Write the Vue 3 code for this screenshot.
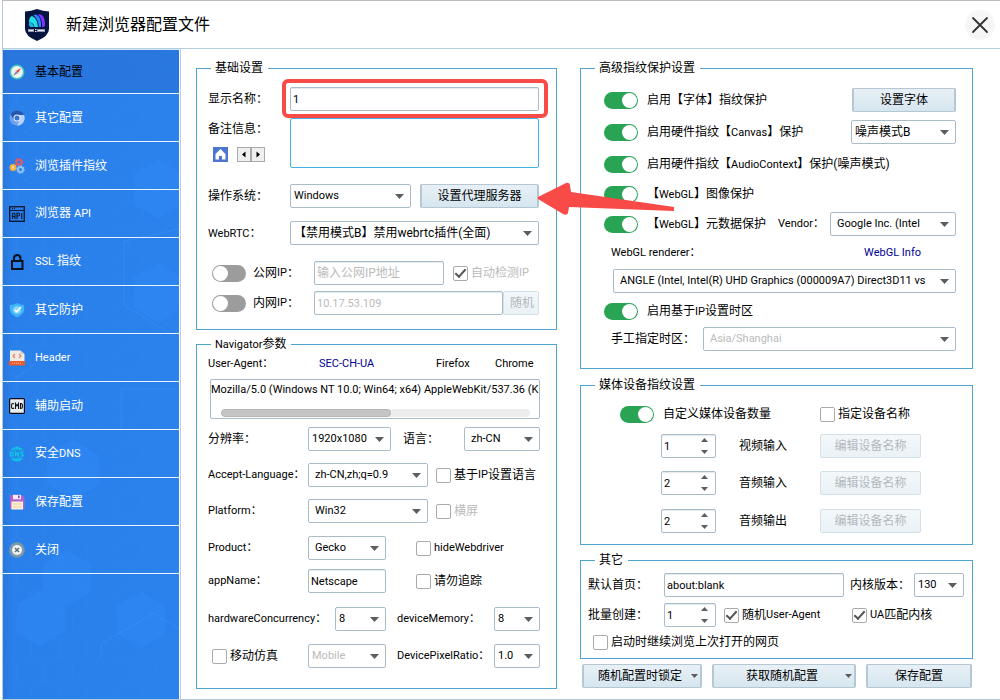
<script setup>
import { reactive } from 'vue'

const form = reactive({
  name: '1',
  note: '',
  publicIp: '',
  localIp: '10.17.53.109',
  userAgent:
    'Mozilla/5.0 (Windows NT 10.0; Win64; x64) AppleWebKit/537.36 (KHTML, like Gecko) Chrome/130.0.0.0 Safari/537.36',
  appName: 'Netscape',
  homepage: 'about:blank',
  batch: 1,
})

const devices = reactive([
  { id: 'video-in', label: '视频输入', count: 1 },
  { id: 'audio-in', label: '音频输入', count: 2 },
  { id: 'audio-out', label: '音频输出', count: 2 },
])
</script>

<template>
  <div class="window">
    <header class="titlebar">
      <svg class="logo" viewBox="0 0 26 32" aria-hidden="true">
        <path d="M1 2.500Q7 2 13 0Q19 2 25 2.500V20Q25 27 13 32Q1 27 1 20Z" fill="#06153f" />
        <path d="M5 13Q5 8 8 7L11 9Q14 13 14 18H10.500Q10 14 5 13Z" fill="#21e0e6" />
        <path d="M5 13Q9 14 10 18H7Q5 18 5 16Z" fill="#16b9ec" />
        <path d="M9.500 6Q12 4.500 14.500 7Q17 10 17 14V18H14.800Q14.500 11 9.500 6Z" fill="#2784ff" />
        <path d="M14 5.500Q17 4.500 19 7Q21 10 21 14V16Q21 18 18 18Q18.500 10 14 5.500Z" fill="#7a35ff" />
        <path d="M5 20v3M7 20v3M9 20v3M11 20.500h1.500M11 22.500h1.500M14 20v3M16 20v3M18 20v3M20 20v3M5 21.500h4M14 21.500h6" stroke="#e9eefb" stroke-width="1.200" fill="none" />
      </svg>
      <h1>新建浏览器配置文件</h1>
      <button class="close" type="button" aria-label="关闭窗口">
        <svg viewBox="0 0 30 30"><path d="M8 8L22 22M22 8L8 22" stroke="#333" stroke-width="1.800" stroke-linecap="round" /></svg>
      </button>
    </header>

    <div class="body">
      <nav class="sidebar">
        <svg class="backdrop" viewBox="0 0 176 650" preserveAspectRatio="xMidYMax slice" aria-hidden="true">
          <defs>
            <pattern id="hex" width="28" height="48" patternUnits="userSpaceOnUse">
              <path d="M14 0V8L28 16V32L14 40V48M14 8L0 16V32L14 40" fill="none" stroke="#3b92f5" stroke-opacity=".16" />
            </pattern>
          </defs>
          <rect width="176" height="650" fill="url(#hex)" />
          <g fill="#2e90fb" fill-opacity=".3">
            <path d="M64 501L88 515V543L64 557L40 543V515Z" />
            <path d="M38 541L62 555V583L38 597L14 583V555Z" />
            <path d="M138 543L162 557V585L138 599L114 585V557Z" />
            <path d="M155 214L180 229V259L155 274L131 259V229Z" />
            <path d="M155 110L180 125V155L155 170L131 155V125Z" />
            <path d="M70 391L96 406V436L70 451L44 436V406Z" />
          </g>
          <g fill="none" stroke="#46a3ff" stroke-opacity=".3">
            <path d="M98 610V595L151 564L176 580" />
            <path d="M176 180L121 192V256L176 290" />
            <path d="M118 380V340H176" />
            <path d="M4 334L40 310" stroke-dasharray="6 3" />
          </g>
        </svg>

        <a href="#basic" class="active">
          <svg class="ico" viewBox="0 0 16 16"><circle cx="8" cy="8" r="7.500" fill="#43c3c0" /><circle cx="8" cy="8" r="6" fill="#eef3f2" /><path d="M12 4L9 9L7 7Z" fill="#e2453c" /><path d="M4 12L7 7L9 9Z" fill="#7e8e98" /></svg>
          <span>基本配置</span>
        </a>
        <a href="#other">
          <svg class="ico" viewBox="0 0 16 16"><circle cx="8" cy="8" r="7.500" fill="#6ea2f0" /><path d="M1.500 4.300A7.500 7.500 0 0 1 15 5H8A3.500 3.500 0 0 0 5 10Z" fill="#2557ad" /><path d="M15 5A7.500 7.500 0 0 1 8 15.500L11 9.500A4 4 0 0 0 9.500 5Z" fill="#b9d2fb" /><circle cx="8" cy="8" r="3.500" fill="#e7effd" /><circle cx="8" cy="8" r="2.500" fill="#3a73d4" /></svg>
          <span>其它配置</span>
        </a>
        <a href="#plugins">
          <svg class="ico" viewBox="0 0 16 16" fill="none"><circle cx="10" cy="4" r="2.600" stroke="#e2586a" stroke-width="2" /><circle cx="10" cy="4" r="3.800" stroke="#e2586a" stroke-dasharray="1.500 1.500" /><circle cx="4" cy="9.500" r="3.500" fill="#f7b03c" /><path d="M4 8v3" stroke="#fff" /><circle cx="11.500" cy="11.500" r="2.600" stroke="#8cc4f8" stroke-width="2" /><circle cx="11.500" cy="11.500" r="3.900" stroke="#8cc4f8" stroke-dasharray="1.500 1.500" /></svg>
          <span>浏览插件指纹</span>
        </a>
        <a href="#api">
          <svg class="ico" viewBox="0 0 16 16" fill="none" stroke="#091a35"><rect x=".7" y=".7" width="14.600" height="14.600" stroke-width="1.400" /><path d="M1 4.500H15M3 2.700h1M5 2.700h1M3.500 13V8.500Q3.500 7 5 7Q6 7 6 8.500V13M3.500 10.500H6M8 13V7H9.500Q10.500 7 10.500 8.500Q10.500 10 9.500 10H8M12.700 7V13" stroke-width="1.200" /></svg>
          <span>浏览器 <span class="en">API</span></span>
        </a>
        <a href="#ssl">
          <svg class="ico" viewBox="0 0 16 16" fill="none" stroke="#06101f" stroke-width="2"><rect x="3" y="7" width="10.500" height="8" /><path d="M5 7V4.500Q5 1 8.200 1Q11.500 1 11.500 4.500V7" /></svg>
          <span><span class="en">SSL</span> 指纹</span>
        </a>
        <a href="#protect">
          <svg class="ico" viewBox="0 0 16 16"><path d="M.8 3Q5 3 8 1Q11 3 15.200 3V8Q14 13 8 15.500Q2 13 .8 8Z" fill="#3db5f6" /><circle cx="8" cy="8" r="3.800" fill="#8ed8ff" /><path d="M6 8L7.700 9.700L12 5" stroke="#fff" stroke-width="1.600" fill="none" /></svg>
          <span>其它防护</span>
        </a>
        <a href="#header">
          <svg class="ico" viewBox="0 0 16 16"><path d="M1 .5H11.500L15.500 4V11H1Z" fill="#eeeae6" /><path d="M11.500 .5V4H15.500Z" fill="#cfc9c4" /><path d="M6 4L4 6L6 8M10 4L12 6L10 8" stroke="#e88865" fill="none" stroke-width="1.300" /><path d="M0 11H16V15.500H0Z" fill="#ec5b2c" /><path d="M3 13.200H13" stroke="#f7bda6" stroke-dasharray="1 1" /></svg>
          <span class="en">Header</span>
        </a>
        <a href="#helper">
          <svg class="ico" viewBox="0 0 16 16" fill="none"><rect x=".6" y=".6" width="14.800" height="14.800" rx="1" fill="#e9edf2" stroke="#050a12" stroke-width="1.200" /><path d="M5 6Q4.500 5.500 3.500 5.500Q2.500 5.500 2.500 8Q2.500 10.500 3.500 10.500Q4.500 10.500 5 10M6.500 11V5.500L8 8L9.500 5.500V11M11.500 5.500V10.500H12Q13.500 10.500 13.500 8Q13.500 5.500 12 5.500Z" stroke="#111" stroke-width="1.100" /></svg>
          <span>辅助启动</span>
        </a>
        <a href="#dns">
          <svg class="ico" viewBox="0 0 16 16" fill="none" stroke="#10c4e4" stroke-width="1.300"><path d="M2.500 4A7 7 0 0 1 13.500 4M2.500 12A7 7 0 0 0 13.500 12M5 4.500Q6 1.500 8 1Q10 1.500 11 4.500M5 11.500Q6 14.500 8 15Q10 14.500 11 11.500M8 1V4.500M8 11.500V15" /><path d="M1.500 6V10H2.500Q4.200 10 4.200 8Q4.200 6 2.500 6ZM6.500 10.500V6L9.500 10V5.500M14.500 6H12.500Q11.800 6 12 7.300L14 8.700Q14.500 10 13.500 10H11.800" /></svg>
          <span>安全<span class="en">DNS</span></span>
        </a>
        <a href="#save">
          <svg class="ico" viewBox="0 0 16 16"><path d="M1 1H13L15.500 4V15H1Z" fill="#b45ed0" /><rect x="4" y=".8" width="8" height="4.500" fill="#f2edf7" /><rect x="9" y="1.500" width="1.600" height="2.600" fill="#8e44a8" /><rect x="2.500" y="7.500" width="11.500" height="8" fill="#fdf1d8" /><path d="M4 10H12.500M4 13H12.500" stroke="#f0cf96" /></svg>
          <span>保存配置</span>
        </a>
        <a href="#close">
          <svg class="ico" viewBox="0 0 16 16"><circle cx="8" cy="8" r="7.800" fill="#7d98a6" /><circle cx="8" cy="8" r="5" fill="#f2f5f6" /><path d="M6 6L10 10M10 6L6 10" stroke="#5c7380" stroke-width="1.600" /></svg>
          <span>关闭</span>
        </a>
      </nav>

      <main class="main">
        <div class="column">
          <fieldset class="basic">
            <legend>基础设置</legend>
            <div class="row gap12">
              <label class="cap" for="name">显示名称：</label>
              <span class="fill marked"><input id="name" v-model="form.name" class="box en" type="text" /></span>
            </div>
            <div class="row gap7 note">
              <div class="cap">
                <label for="note">备注信息：</label>
                <div class="tools">
                  <button type="button" class="home" aria-label="主页">
                    <svg viewBox="0 0 15 15"><path d="M0 0H15V15H0Z" fill="#4f76cf" /><path d="M7.500 2L2.500 7V12.500H6V9H9V12.500H12.500V7Z" fill="#fff" /></svg>
                  </button>
                  <span class="stepper">
                    <button type="button" aria-label="上一个"><svg viewBox="0 0 12 13"><path d="M7.500 3.500V9.500L4 6.500Z" /></svg></button>
                    <button type="button" aria-label="下一个"><svg viewBox="0 0 12 13"><path d="M4.500 3.500V9.500L8 6.500Z" /></svg></button>
                  </span>
                </div>
              </div>
              <textarea id="note" v-model="form.note" class="fill"></textarea>
            </div>
            <div class="row gap16">
              <label class="cap" for="os">操作系统：</label>
              <span class="sel fill"><select id="os"><option>Windows</option></select></span>
              <span class="proxy">
                <button type="button" class="btn">设置代理服务器</button>
                <svg class="pointer" viewBox="0 0 138 36" aria-hidden="true">
                  <path d="M1 15L29 1Q33 0 33 4L34 10L137 25V29L32 25L31 31Q30 34 26 32L1 17Q0 16 1 15Z" fill="#f84a47" />
                </svg>
              </span>
            </div>
            <div class="row gap13">
              <label class="cap" for="rtc"><span class="en">WebRTC</span>：</label>
              <span class="sel fill"><select id="rtc" class="cjk"><option>【禁用模式B】禁用webrtc插件(全面)</option></select></span>
            </div>
            <div class="row gap16 ip">
              <label class="toggle ipcap"><input type="checkbox" class="switch" />公网<span class="en">IP</span>：</label>
              <input class="box fill" type="text" v-model="form.publicIp" placeholder="输入公网IP地址" aria-label="公网IP地址" />
              <label class="check auto off"><input type="checkbox" checked />自动检测<span class="en">IP</span></label>
            </div>
            <div class="row gap6 ip">
              <label class="toggle ipcap"><input type="checkbox" class="switch" />内网<span class="en">IP</span>：</label>
              <input class="box en fill" type="text" :value="form.localIp" disabled aria-label="内网IP地址" />
              <button type="button" class="btn random" disabled>随机</button>
            </div>
          </fieldset>

          <fieldset class="navigator">
            <legend><span class="en">Navigator</span>参数</legend>
            <div class="links en">
              <label for="ua">User-Agent：</label>
              <a href="#sec" class="blue">SEC-CH-UA</a>
              <a href="#firefox">Firefox</a>
              <a href="#chrome">Chrome</a>
            </div>
            <div class="agent">
              <input id="ua" class="en" type="text" v-model="form.userAgent" />
              <div class="track"><div class="thumb"></div></div>
            </div>
            <div class="row gap8">
              <label class="cap" for="res">分辨率：</label>
              <span class="sel w83"><select id="res"><option>1920x1080</option></select></span>
              <label class="second" for="lang">语言：</label>
              <span class="sel w76 end"><select id="lang" class="pad"><option>zh-CN</option></select></span>
            </div>
            <div class="row gap12">
              <label class="cap en" for="accept">Accept-Language：</label>
              <span class="sel w120"><select id="accept" class="pad"><option>zh-CN,zh;q=0.9</option></select></span>
              <label class="check near"><input type="checkbox" />基于<span class="en">IP</span>设置语言</label>
            </div>
            <div class="row gap12">
              <label class="cap en" for="platform">Platform：</label>
              <span class="sel w120"><select id="platform" class="pad"><option>Win32</option></select></span>
              <label class="check near off"><input type="checkbox" disabled />横屏</label>
            </div>
            <div class="row gap13">
              <label class="cap en" for="product">Product：</label>
              <span class="sel w78"><select id="product" class="pad"><option>Gecko</option></select></span>
              <label class="check far en"><input type="checkbox" />hideWebdriver</label>
            </div>
            <div class="row gap9">
              <label class="cap en" for="appname">appName：</label>
              <input id="appname" v-model="form.appName" class="box en w78" type="text" />
              <label class="check far"><input type="checkbox" />请勿追踪</label>
            </div>
            <div class="row gap14">
              <label class="cap wide en" for="hw">hardwareConcurrency：</label>
              <span class="sel w51"><select id="hw"><option>8</option></select></span>
              <label class="third en" for="mem">deviceMemory：</label>
              <span class="sel w46 end"><select id="mem"><option>8</option></select></span>
            </div>
            <div class="row gap13">
              <label class="cap check mobile"><input type="checkbox" />移动仿真</label>
              <span class="sel w78"><select disabled aria-label="移动设备"><option>Mobile</option></select></span>
              <label class="third en" for="dpr">DevicePixelRatio：</label>
              <span class="sel w46 end"><select id="dpr"><option>1.0</option></select></span>
            </div>
          </fieldset>
        </div>

        <div class="column right">
          <fieldset class="advanced">
            <legend>高级指纹保护设置</legend>
            <div class="row gap13">
              <label class="toggle"><input type="checkbox" class="switch" checked />启用【字体】指纹保护</label>
              <button type="button" class="btn font end">设置字体</button>
            </div>
            <div class="row gap8">
              <label class="toggle"><input type="checkbox" class="switch" checked /><span>启用硬件指纹【<span class="en">Canvas</span>】保护</span></label>
              <span class="sel w105 end"><select class="cjk" aria-label="Canvas 噪声模式"><option>噪声模式B</option></select></span>
            </div>
            <div class="row gap8">
              <label class="toggle"><input type="checkbox" class="switch" checked /><span>启用硬件指纹【<span class="en">AudioContext</span>】保护(噪声模式)</span></label>
            </div>
            <div class="row gap6">
              <label class="toggle"><input type="checkbox" class="switch" checked /><span>【<span class="en">WebGL</span>】图像保护</span></label>
            </div>
            <div class="row gap6">
              <label class="toggle"><input type="checkbox" class="switch" checked /><span>【<span class="en">WebGL</span>】元数据保护</span></label>
              <label class="second en" for="vendor">Vendor：</label>
              <span class="sel w126 end"><select id="vendor" class="pad"><option>Google Inc. (Intel</option></select></span>
            </div>
            <div class="row gap8 renderer en">
              <label for="renderer">WebGL renderer：</label>
              <a href="#webgl" class="blue">WebGL Info</a>
            </div>
            <div class="row gap8 gpu">
              <span class="sel fill"><select id="renderer" class="pad"><option>ANGLE (Intel, Intel(R) UHD Graphics (000009A7) Direct3D11 vs</option></select></span>
            </div>
            <div class="row gap6">
              <label class="toggle"><input type="checkbox" class="switch" checked /><span>启用基于<span class="en">IP</span>设置时区</span></label>
            </div>
            <div class="row gap4 zone">
              <label for="zone">手工指定时区：</label>
              <span class="sel fill"><select id="zone" class="pad" disabled><option>Asia/Shanghai</option></select></span>
            </div>
          </fieldset>

          <fieldset class="media">
            <legend>媒体设备指纹设置</legend>
            <div class="row gap10">
              <label class="toggle"><input type="checkbox" class="switch" checked />自定义媒体设备数量</label>
              <label class="check named"><input type="checkbox" />指定设备名称</label>
            </div>
            <div v-for="d in devices" :key="d.id" class="row device">
              <span class="num w55"><input :id="d.id" v-model="d.count" type="number" class="box en" /></span>
              <label :for="d.id">{{ d.label }}</label>
              <button type="button" class="btn named" disabled>编辑设备名称</button>
            </div>
          </fieldset>

          <fieldset class="misc">
            <legend>其它</legend>
            <div class="row gap6">
              <label class="cap" for="homepage">默认首页：</label>
              <input id="homepage" v-model="form.homepage" class="box en fill" type="text" />
              <label class="core" for="core">内核版本：</label>
              <span class="sel w50"><select id="core"><option>130</option></select></span>
            </div>
            <div class="row gap6">
              <label class="cap" for="batch">批量创建：</label>
              <span class="num w52"><input id="batch" v-model="form.batch" type="number" class="box en" /></span>
              <label class="check near"><input type="checkbox" checked />随机<span class="en">User-Agent</span></label>
              <label class="check match"><input type="checkbox" checked /><span class="en">UA</span>匹配内核</label>
            </div>
            <div class="row gap4 resume">
              <label class="check"><input type="checkbox" />启动时继续浏览上次打开的网页</label>
            </div>
          </fieldset>

          <div class="actions">
            <button type="button" class="btn split">随机配置时锁定</button>
            <button type="button" class="btn split">获取随机配置</button>
            <button type="button" class="btn">保存配置</button>
          </div>
        </div>
      </main>
    </div>
  </div>
</template>

<style>
body {
  background: #fff;
}
</style>

<style scoped>
* {
  box-sizing: border-box;
}
.window {
  display: flex;
  flex-direction: column;
  min-height: 100vh;
  margin-left: 2px;
  border-top: 1px solid #bbb;
  border-left: 1px solid #bccbd8;
  border-bottom: 1px solid #b8cad6;
  color: #000;
  font: 12px/14px Roboto, "Noto Sans CJK SC", sans-serif;
  white-space: nowrap;
}
button,
input,
select,
textarea {
  margin: 0;
  color: inherit;
  font: inherit;
}
.window .en,
.window select {
  font-size: 11px;
}
.window select.cjk {
  font-size: 12px;
}
a {
  color: inherit;
  text-decoration: none;
}
.titlebar {
  display: flex;
  align-items: center;
  height: 48px;
  padding: 0 5px 0 21px;
  border-bottom: 1px solid #b4cddd;
}
.logo {
  width: 26px;
  height: 32px;
}
h1 {
  flex: 1;
  margin: 0 0 0 16px;
  font-size: 16px;
  font-weight: 400;
  line-height: 20px;
}
.close {
  width: 30px;
  height: 30px;
  padding: 0;
  border: 0;
  border-radius: 50%;
  background: #f6f6f6;
}
.close svg {
  display: block;
}
.body {
  display: flex;
  flex: 1;
}
.sidebar {
  position: relative;
  flex: none;
  width: 178px;
  border-top: 1px solid #d8eaf8;
  border-right: 1px solid #b9cde0;
  background: linear-gradient(90deg, #2877dc, #2a80ea 8px, #2b82ec 176px, #fff 0);
  color: #fff;
}
.backdrop {
  position: absolute;
  inset: 0;
  width: 176px;
  height: 100%;
}
.sidebar a {
  position: relative;
  display: flex;
  align-items: center;
  gap: 10px;
  height: 48px;
  margin-right: 1px;
  padding-left: 6px;
  border-bottom: 1px solid #e8f4ff;
}
.sidebar a.active {
  height: 44px;
  background: rgba(40, 110, 210, 0.5);
  color: #000;
}
.ico {
  width: 16px;
  height: 16px;
}
.main {
  display: grid;
  flex: 1;
  grid-template-columns: minmax(0, 361fr) minmax(0, 393fr);
  align-items: start;
  gap: 23px;
  padding: 12px 27px 10px 15px;
}
.column {
  display: flex;
  flex-direction: column;
  gap: 7px;
}
.column.right {
  gap: 9px;
}
fieldset {
  min-width: 0;
  margin: 0;
  padding: 0 16px 14px 11px;
  border: 1px solid #4fa3cf;
}
legend {
  height: 14px;
  margin-left: 3px;
  padding: 0 5px 0 4px;
}
.row {
  display: flex;
  align-items: center;
  height: 24px;
}
.gap4 { margin-top: 4px; }
.gap6 { margin-top: 6px; }
.gap7 { margin-top: 7px; }
.gap8 { margin-top: 8px; }
.gap9 { margin-top: 9px; }
.gap10 { margin-top: 10px; }
.gap12 { margin-top: 12px; }
.gap13 { margin-top: 13px; }
.gap14 { margin-top: 14px; }
.gap16 { margin-top: 16px; }
.w46 { width: 46px; }
.w50 { width: 50px; }
.w51 { width: 51px; }
.w52 { width: 52px; }
.w55 { width: 55px; }
.w76 { width: 76px; }
.w78 { width: 78px; }
.w83 { width: 83px; }
.w105 { width: 105px; }
.w120 { width: 120px; }
.w126 { width: 126px; }
.fill {
  flex: 1;
  min-width: 0;
}
.end {
  margin-left: auto;
}
.cap {
  flex: none;
  width: 82px;
}
.box {
  height: 24px;
  padding: 0 2px;
  border: 1px solid #a9bdc9;
  border-radius: 2px;
  outline: 0;
  background: #fff;
  box-shadow: inset 0 1px 1px #e3e9ee;
}
.box::placeholder,
.box:disabled {
  color: #bbb;
}
.sel {
  position: relative;
  flex-shrink: 0;
}
.sel.fill {
  flex-shrink: 1;
}
.sel select {
  display: block;
  appearance: none;
  width: 100%;
  height: 24px;
  padding: 0 18px 0 3px;
  border: 1px solid #a9bdc9;
  border-radius: 2px;
  outline: 0;
  background: #fff;
}
.sel select.pad {
  padding-left: 6px;
}
.sel select:disabled {
  color: #bbb;
  opacity: 1;
}
.sel::after,
.num::after,
.num::before,
.split::after {
  content: "";
  position: absolute;
  width: 9px;
  height: 5px;
  background: #5d5d5d;
  clip-path: polygon(0 0, 100% 0, 50% 100%);
  pointer-events: none;
}
.sel::after {
  top: 10px;
  right: 7px;
}
.num {
  position: relative;
  flex: none;
}
.num input {
  display: block;
  width: 100%;
  appearance: textfield;
}
.num input::-webkit-inner-spin-button {
  appearance: none;
}
.num::before,
.num::after {
  right: 8px;
  width: 7px;
  height: 4px;
}
.num::before {
  top: 4px;
  clip-path: polygon(50% 0, 100% 100%, 0 100%);
}
.num::after {
  top: 16px;
}
.btn {
  position: relative;
  height: 24px;
  padding: 0 6px;
  border: 1px solid #b3c8d4;
  border-width: 1px 2px;
  border-radius: 2px;
  background: linear-gradient(#e8f0f6, #d6e6ef);
}
.window .btn:disabled {
  border: 1px solid #d3e0e8;
  background: linear-gradient(#f3f7fa, #eaf2f6);
  color: #b3b9bd;
}
.check,
.toggle {
  display: flex;
  align-items: center;
}
.off {
  color: #bbb;
}
.check input {
  position: relative;
  flex: none;
  appearance: none;
  width: 15px;
  height: 15px;
  margin-right: 3px;
  border: 1px solid #aaa;
  border-radius: 2px;
  background: #fff;
}
.check input:checked::after {
  content: "";
  position: absolute;
  top: 2px;
  left: 1px;
  box-sizing: border-box;
  width: 11px;
  height: 6px;
  border: solid #555;
  border-width: 0 0 2px 2px;
  transform: rotate(-48deg);
}
.switch {
  position: relative;
  flex: none;
  appearance: none;
  width: 34px;
  height: 17px;
  border-radius: 9px;
  background: #9c9c9c;
}
.switch::before {
  content: "";
  position: absolute;
  top: 1px;
  left: 1px;
  width: 15px;
  height: 15px;
  border-radius: 50%;
  background: #fff;
}
.switch:checked {
  background: #29a354;
}
.switch:checked::before {
  left: 18px;
}

.basic {
  padding-right: 17px;
}
.marked {
  position: relative;
}
.marked .box {
  display: block;
  width: 100%;
}
.marked::after {
  content: "";
  position: absolute;
  inset: -8px -9px -7px -8px;
  border: 4px solid #f84a47;
  border-radius: 6px;
  pointer-events: none;
}
.note {
  align-items: stretch;
  height: 50px;
}
.note .cap {
  padding-top: 4px;
}
.tools {
  display: flex;
  gap: 9px;
  margin: 11px 0 0 5px;
}
.tools button {
  padding: 0;
  border: 0;
  background: none;
}
.tools svg {
  display: block;
}
.home {
  width: 15px;
  height: 15px;
}
.tools .stepper {
  display: flex;
}
.tools .stepper button {
  width: 14px;
  height: 15px;
  border: 1px solid #aaa;
  background: #efefef;
}
textarea {
  height: 50px;
  padding: 2px;
  border: 1px solid #43b0e6;
  border-radius: 2px;
  outline: 0;
  resize: none;
}
.proxy {
  position: relative;
  width: 119px;
  margin-left: 9px;
}
.proxy .btn {
  width: 100%;
}
.pointer {
  position: absolute;
  z-index: 2;
  top: -2px;
  left: 117px;
  width: 138px;
  height: 36px;
  pointer-events: none;
}
.ipcap {
  flex: none;
  width: 106px;
}
.ip .switch {
  margin: 0 7px 0 4px;
}
.auto {
  width: 86px;
  margin-left: 9px;
}
.random {
  width: 36px;
}

.navigator {
  padding-bottom: 20px;
}
.navigator .cap {
  width: 100px;
}
.navigator .cap.wide {
  width: 127px;
}
.links {
  display: grid;
  grid-template-columns: 111px 117px 59px 1fr;
  height: 16px;
  margin-top: 5px;
  line-height: 16px;
}
.blue {
  color: #000096;
}
.agent {
  height: 40px;
  margin: 7px 0 0 2px;
  border: 1px solid #a9bdc9;
  border-radius: 2px;
}
.agent input {
  display: block;
  width: 100%;
  height: 18px;
  padding: 0;
  border: 0;
  outline: 0;
  background: none;
}
.track {
  height: 8px;
  margin: 11px 9px 0 10px;
  border-radius: 4px;
  background: #ededed;
}
.thumb {
  width: 55%;
  height: 100%;
  border: 1px solid #b5b5b5;
  border-radius: 4px;
  background: #c5c5c5;
}
.second {
  margin-left: 12px;
}
.third {
  margin-left: 11px;
}
.near {
  margin-left: 8px;
}
.far {
  margin-left: 30px;
}
.mobile {
  padding-left: 4px;
}

.advanced {
  padding: 0 16px 17px 23px;
}
.advanced legend,
.media legend {
  margin-left: -9px;
}
.advanced .switch,
.media .switch {
  margin-right: 9px;
}
.font {
  width: 104px;
}
.row.renderer {
  justify-content: space-between;
  height: 18px;
  padding: 0 35px 0 7px;
}
.row.gpu {
  height: 24px;
  padding-left: 9px;
}
.row.gpu.gap8 {
  margin-top: 7px;
}
.zone label {
  width: 99px;
  padding-left: 7px;
}
.media {
  padding: 0 51px 11px 39px;
}
.media .row.gap10 + .device {
  margin-top: 8px;
}
.media legend {
  margin-left: -25px;
}
.named {
  width: 101px;
  margin-left: auto;
}
.device {
  margin-top: 13px;
  padding-left: 41px;
}
.device label {
  margin-left: 23px;
}
.device:last-child {
  margin-top: 14px;
}
.misc {
  margin-top: -1px;
  padding: 0 8px 4px 7px;
}
.misc legend {
  margin-left: 7px;
}
.misc .cap {
  width: 76px;
}
.core {
  width: 64px;
  margin-left: 6px;
}
.match {
  width: 112px;
  margin-left: auto;
}
.row.resume {
  margin-top: 3px;
  padding-left: 5px;
}
.actions {
  display: grid;
  grid-template-columns: 120fr 144fr 106fr;
  gap: 10px;
  margin: -4px 1px 0 2px;
}
.actions .split {
  padding-right: 10px;
}
.split::after {
  top: 9px;
  right: 2px;
  width: 7px;
  height: 4px;
}
</style>
